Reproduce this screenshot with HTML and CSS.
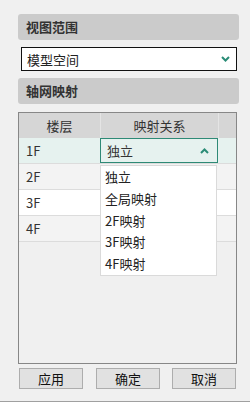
FILE: index.html
```html
<!DOCTYPE html>
<html lang="zh-CN">
<head>
<meta charset="UTF-8" />
<meta name="viewport" content="width=device-width, initial-scale=1" />
<title>轴网映射</title>
<link rel="stylesheet" href="styles.css">
</head>
<body>
  <div class="panel">
    <div class="section-title">视图范围</div>
    <div class="view-select">
      <span>模型空间</span>
      <svg class="chevron" width="9" height="6" viewBox="0 0 9 6"><path d="M1 1 L4.5 4.5 L8 1" fill="none" stroke="#2a8c76" stroke-width="2"/></svg>
    </div>
    <div class="section-title">轴网映射</div>

    <div class="grid-table">
      <div class="row head">
        <div class="cell center">楼层</div>
        <div class="cell center">映射关系</div>
        <div class="cell"></div>
      </div>
      <div class="row selected">
        <div class="cell">1F</div>
        <div class="cell combo-cell">
          <div class="combo">
            <span>独立</span>
            <svg class="chevron" width="9" height="6" viewBox="0 0 9 6"><path d="M1 5 L4.5 1.5 L8 5" fill="none" stroke="#2a8c76" stroke-width="2"/></svg>
          </div>
          <ul class="dropdown">
            <li>独立</li>
            <li>全局映射</li>
            <li>2F映射</li>
            <li>3F映射</li>
            <li>4F映射</li>
          </ul>
        </div>
        <div class="cell"></div>
      </div>
      <div class="row alt">
        <div class="cell">2F</div>
        <div class="cell"></div>
        <div class="cell"></div>
      </div>
      <div class="row">
        <div class="cell">3F</div>
        <div class="cell"></div>
        <div class="cell"></div>
      </div>
      <div class="row alt">
        <div class="cell">4F</div>
        <div class="cell"></div>
        <div class="cell"></div>
      </div>
    </div>

    <div class="buttons">
      <button class="btn">应用</button>
      <button class="btn">确定</button>
      <button class="btn">取消</button>
    </div>
  </div>
</body>
</html>
```

FILE: styles.css
```css
/* Base */
* {
  box-sizing: border-box;
}
body {
  margin: 0;
  background: #f0f0f0;
  color: #333;
  font-family: "Noto Sans CJK SC", "Noto Sans", sans-serif;
  font-size: 13px;
}
.panel {
  height: 402px;
  padding: 14px 11px 0 18px;
  border-bottom: 1px solid #a0a0a0;
  display: flex;
  flex-direction: column;
}

/* Section headers */
.section-title {
  height: 26px;
  line-height: 26px;
  padding-left: 8px;
  background: #cbcbcb;
  border-radius: 3px;
  font-weight: 700;
  color: #333;
}
.view-select {
  height: 24px;
  margin: 7px 2px 7px 3px;
  padding: 0 6px 0 5px;
  background: white;
  border: 1px solid #111;
  display: flex;
  align-items: center;
  justify-content: space-between;
  color: #222;
}

/* Table */
.grid-table {
  margin-top: 8px;
  width: 219px;
  height: 252px;
  border: 1px solid #878787;
  background: #f0f0f0;
}
.row {
  display: grid;
  grid-template-columns: 81px 118px 1fr;
  height: 26px;
  border-bottom: 1px solid #dcdcdc;
  background: white;
}
.row.head {
  height: 25px;
  background: #d6d6d6;
  border-bottom: none;
}
.row.head .cell + .cell {
  border-left: 1px solid #e4e4e4;
}
.row.selected {
  background: #e6f2ef;
}
.row.alt {
  background: #f3f3f3;
}
.cell {
  padding-left: 7px;
  display: flex;
  align-items: center;
}
.cell.center {
  justify-content: center;
  padding-left: 0;
}

/* Combo box in the selected row */
.combo-cell {
  position: relative;
  padding: 0;
  align-items: stretch;
}
.combo {
  flex: 1;
  height: 25px;
  border: 1px solid #2e8a76;
  padding: 0 8px 0 6px;
  display: flex;
  align-items: center;
  justify-content: space-between;
}
.dropdown {
  position: absolute;
  top: 27px;
  left: 0;
  width: 117px;
  margin: 0;
  padding: 0;
  list-style: none;
  background: white;
  border: 1px solid #dadada;
  z-index: 2;
}
.dropdown li {
  height: 21.8px;
  line-height: 21.8px;
  padding-left: 4px;
  color: #222;
}

/* Buttons */
.buttons {
  margin-top: 4px;
  padding-left: 1px;
  display: flex;
  gap: 13px;
}
.btn {
  width: 64px;
  height: 21px;
  padding: 0;
  background: #e1e1e1;
  border: 1px solid #adadad;
  font-family: inherit;
  font-size: 13px;
  color: #111;
}
.btn:nth-child(2) {
  width: 64px;
}
.btn:last-child {
  margin-left: -1px;
}
```
